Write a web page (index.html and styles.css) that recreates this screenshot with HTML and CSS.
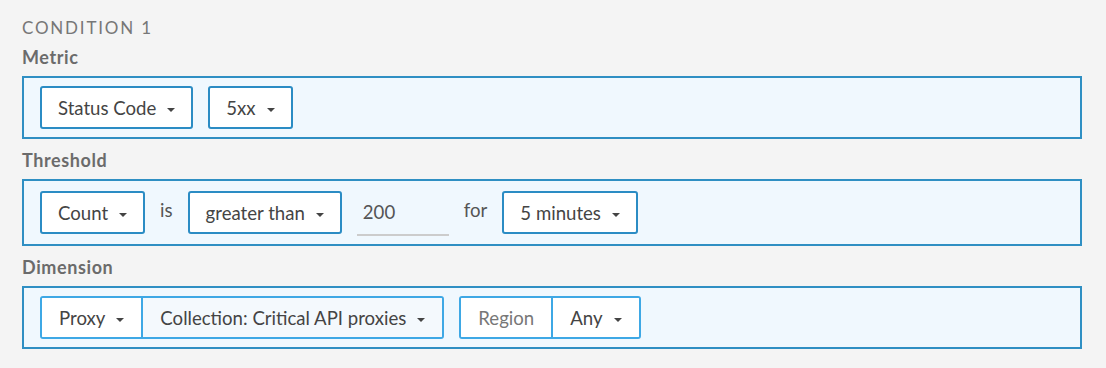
FILE: index.html
```html
<!DOCTYPE html>
<html lang="en">
<head>
  <meta charset="UTF-8">
  <title>Condition</title>
  <link rel="stylesheet" href="styles.css">
</head>
<body>
  <div class="condition">
    <div class="condition-title">Condition 1</div>

    <div class="field-label">Metric</div>
    <div class="panel">
      <button class="dropdown">Status Code <span class="caret"></span></button>
      <button class="dropdown">5xx <span class="caret"></span></button>
    </div>

    <div class="field-label">Threshold</div>
    <div class="panel">
      <button class="dropdown">Count <span class="caret"></span></button>
      <span class="word">is</span>
      <button class="dropdown">greater than <span class="caret"></span></button>
      <input class="amount" type="text" value="200">
      <span class="word">for</span>
      <button class="dropdown">5 minutes <span class="caret"></span></button>
    </div>

    <div class="field-label">Dimension</div>
    <div class="panel">
      <div class="group">
        <button class="segment">Proxy <span class="caret"></span></button>
        <button class="segment segment-plain">Collection: Critical API proxies <span class="caret"></span></button>
      </div>
      <div class="group">
        <span class="segment segment-name">Region</span>
        <button class="segment">Any <span class="caret"></span></button>
      </div>
    </div>
  </div>
</body>
</html>
```

FILE: styles.css
```css
body {
  margin: 0;
  padding: 14px 24px 0 22px;
  background: #f4f4f4;
  font-family: Lato, "Open Sans", sans-serif;
  color: #444;
}
.condition-title {
  font-size: 17px;
  letter-spacing: 1.8px;
  text-transform: uppercase;
  color: #777;
  line-height: 28px;
}
.field-label {
  font-size: 18px;
  font-weight: bold;
  letter-spacing: 0.6px;
  color: #6b6b6b;
  line-height: 22px;
  margin: 2px 0 8px;
}
.condition-title + .field-label {
  margin-top: 4px;
}
.panel {
  display: flex;
  align-items: center;
  gap: 15px;
  padding: 8px 16px;
  background: #f0f8fe;
  border: 2px solid #2f8fc3;
  margin-bottom: 10px;
}
.dropdown {
  display: flex;
  align-items: center;
  height: 43px;
  padding: 0 16px;
  background: #fff;
  border: 2px solid #2b8cc4;
  border-radius: 3px;
  font-family: inherit;
  font-size: 18.6px;
  color: #444;
}
.caret {
  display: inline-block;
  margin: 4px 0 0 11px;
  border-left: 4.5px solid transparent;
  border-right: 4.5px solid transparent;
  border-top: 4.5px solid #444;
}
.word {
  font-size: 18.6px;
  color: #555;
  padding-bottom: 6px;
}
.amount {
  width: 92px;
  height: 47px;
  box-sizing: border-box;
  padding: 0 6px;
  border: none;
  border-bottom: 2px solid #ccc;
  background: transparent;
  font-family: inherit;
  font-size: 18.6px;
  color: #555;
}
.group {
  display: flex;
  height: 43px;
  box-sizing: border-box;
  border: 2px solid #3ea8e5;
  border-radius: 3px;
  overflow: hidden;
}
.segment {
  display: flex;
  align-items: center;
  padding: 0 17px;
  background: #fff;
  border: none;
  font-family: inherit;
  font-size: 18.6px;
  color: #444;
}
.segment + .segment {
  border-left: 2px solid #3ea8e5;
}
.segment-plain {
  background: #f4f9fd;
}
.segment-name {
  color: #777;
}
```
